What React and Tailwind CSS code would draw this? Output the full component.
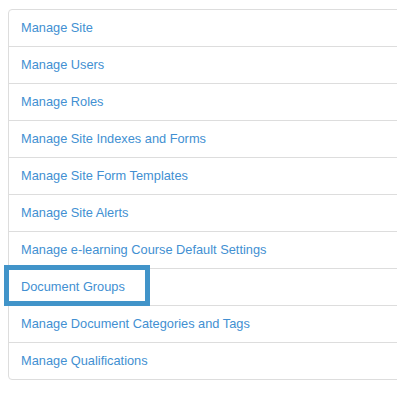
export default function App() {
  const items = [
    "Manage Site",
    "Manage Users",
    "Manage Roles",
    "Manage Site Indexes and Forms",
    "Manage Site Form Templates",
    "Manage Site Alerts",
    "Manage e-learning Course Default Settings",
    "Document Groups",
    "Manage Document Categories and Tags",
    "Manage Qualifications",
  ];
  return (
    <div className="relative w-[397px] h-[401px] overflow-hidden bg-white" style={{ fontFamily: '"Liberation Sans", Arial, sans-serif' }}>
      <div className="absolute left-[8px] top-[9px] w-[420px] border border-[#dddddd] rounded-[4px] bg-white">
        {items.map((t, i) => (
          <div
            key={t}
            className={`h-[36px] flex items-center pl-[12px] text-[12.8px] text-[#4290d2] ${i < items.length - 1 ? "box-content border-b border-[#dddddd]" : ""}`}
          >
            {t}
          </div>
        ))}
      </div>
      <div className="absolute left-[4px] top-[265px] w-[146px] h-[41px] border-[5px] border-[#4194c9]" />
    </div>
  );
}
